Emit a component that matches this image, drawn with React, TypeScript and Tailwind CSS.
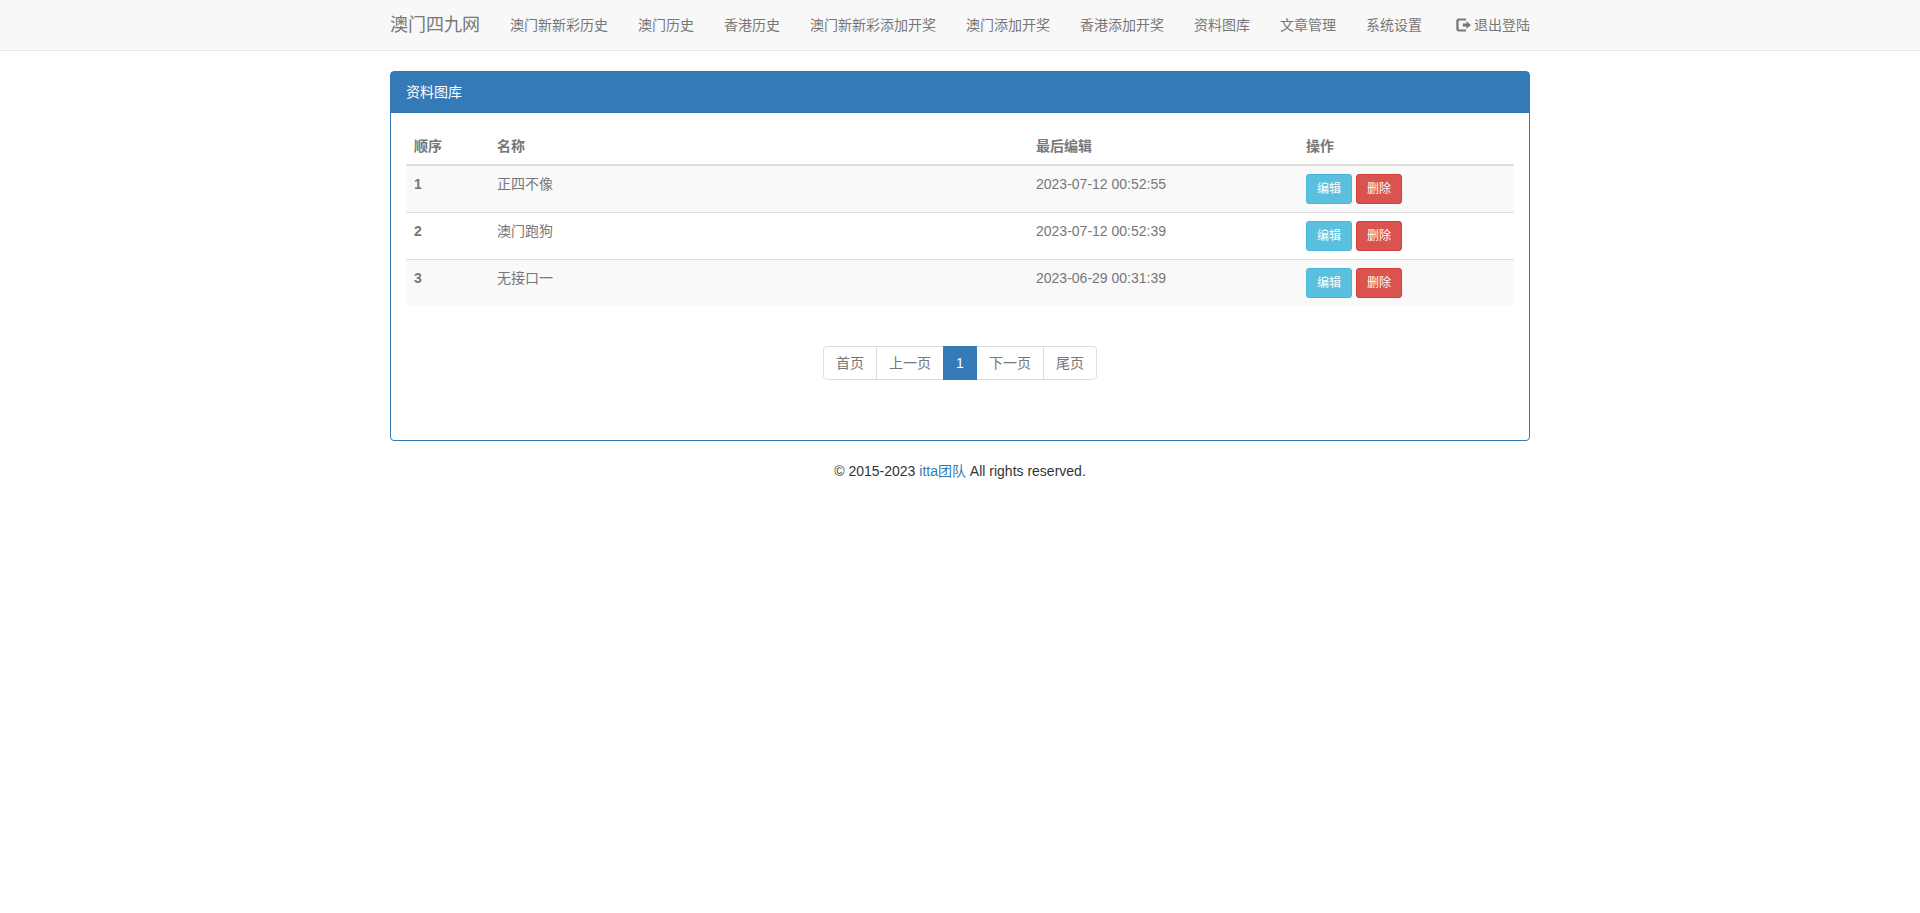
const navLinks = [
  '澳门新新彩历史',
  '澳门历史',
  '香港历史',
  '澳门新新彩添加开奖',
  '澳门添加开奖',
  '香港添加开奖',
  '资料图库',
  '文章管理',
  '系统设置',
];

const rows = [
  { id: 1, name: '正四不像', updated: '2023-07-12 00:52:55' },
  { id: 2, name: '澳门跑狗', updated: '2023-07-12 00:52:39' },
  { id: 3, name: '无接口一', updated: '2023-06-29 00:31:39' },
];

const pages = ['首页', '上一页', '1', '下一页', '尾页'];

function LogoutIcon() {
  return (
    <svg viewBox="0 0 15 14" className="h-[14px] w-[15px]" fill="currentColor" aria-hidden="true">
      <path d="M3 0.5H10V2.5H3.6Q2.6 2.5 2.6 3.5V10.5Q2.6 11.5 3.6 11.5H10V13.5H3Q0.3 13.5 0.3 10.8V3.2Q0.3 0.5 3 0.5Z" />
      <path d="M10.4 3.2L15 7L10.4 10.8V8.4H6.8V5.6H10.4Z" />
    </svg>
  );
}

function Navbar() {
  return (
    <nav className="border-b border-[#e7e7e7] bg-[#f8f8f8] text-[#777]">
      <div className="mx-auto flex max-w-[1170px] items-center px-[15px]">
        <a href="#" className="mr-[15px] text-lg leading-[20px]">
          澳门四九网
        </a>
        <ul className="flex">
          {navLinks.map((label) => (
            <li key={label}>
              <a href="#" className="block p-[15px]">
                {label}
              </a>
            </li>
          ))}
        </ul>
        <a href="#" className="ml-auto flex items-center gap-[3px] py-[15px]">
          <LogoutIcon />
          退出登陆
        </a>
      </div>
    </nav>
  );
}

function GalleryTable() {
  return (
    <table className="w-full table-fixed border-collapse text-left">
      <thead>
        <tr className="border-b-2 border-[#ddd]">
          <th className="w-[83px] p-2">顺序</th>
          <th className="p-2">名称</th>
          <th className="w-[270px] p-2">最后编辑</th>
          <th className="w-[216px] p-2">操作</th>
        </tr>
      </thead>
      <tbody>
        {rows.map((row) => (
          <tr key={row.id} className="border-t border-[#ddd] align-top odd:bg-[#f9f9f9]">
            <th className="p-2">{row.id}</th>
            <td className="p-2">{row.name}</td>
            <td className="p-2">{row.updated}</td>
            <td className="p-2">
              <div className="flex gap-1 text-xs leading-[18px] text-white">
                <button className="rounded-[3px] border border-[#46b8da] bg-[#5bc0de] px-[10px] py-[5px]">编辑</button>
                <button className="rounded-[3px] border border-[#d43f3a] bg-[#d9534f] px-[10px] py-[5px]">删除</button>
              </div>
            </td>
          </tr>
        ))}
      </tbody>
    </table>
  );
}

function Pagination() {
  return (
    <ul className="my-10 flex justify-center">
      {pages.map((page) => (
        <li key={page} className="group -ml-px first:ml-0">
          <a
            href="#"
            className={
              page === '1'
                ? 'relative block border border-[#337ab7] bg-[#337ab7] px-3 py-[6px] text-white'
                : 'block border border-[#ddd] px-3 py-[6px] group-first:rounded-l group-last:rounded-r'
            }
          >
            {page}
          </a>
        </li>
      ))}
    </ul>
  );
}

export default function App() {
  return (
    <div className="bg-white font-['Liberation_Sans','Noto_Sans_CJK_SC',sans-serif] text-sm leading-[20px] text-[#333]">
      <Navbar />
      <main className="mx-auto mt-5 max-w-[1170px] px-[15px]">
        <section className="rounded border border-[#337ab7]">
          <h1 className="border-b border-[#337ab7] bg-[#337ab7] px-[15px] py-[10px] text-white">资料图库</h1>
          <div className="px-[15px] pt-[15px] pb-5 text-[#777]">
            <GalleryTable />
            <Pagination />
          </div>
        </section>
      </main>
      <footer className="mt-5 text-center">
        © 2015-2023{' '}
        <a href="#" className="text-[#337ab7]">
          itta团队
        </a>{' '}
        All rights reserved.
      </footer>
    </div>
  );
}
